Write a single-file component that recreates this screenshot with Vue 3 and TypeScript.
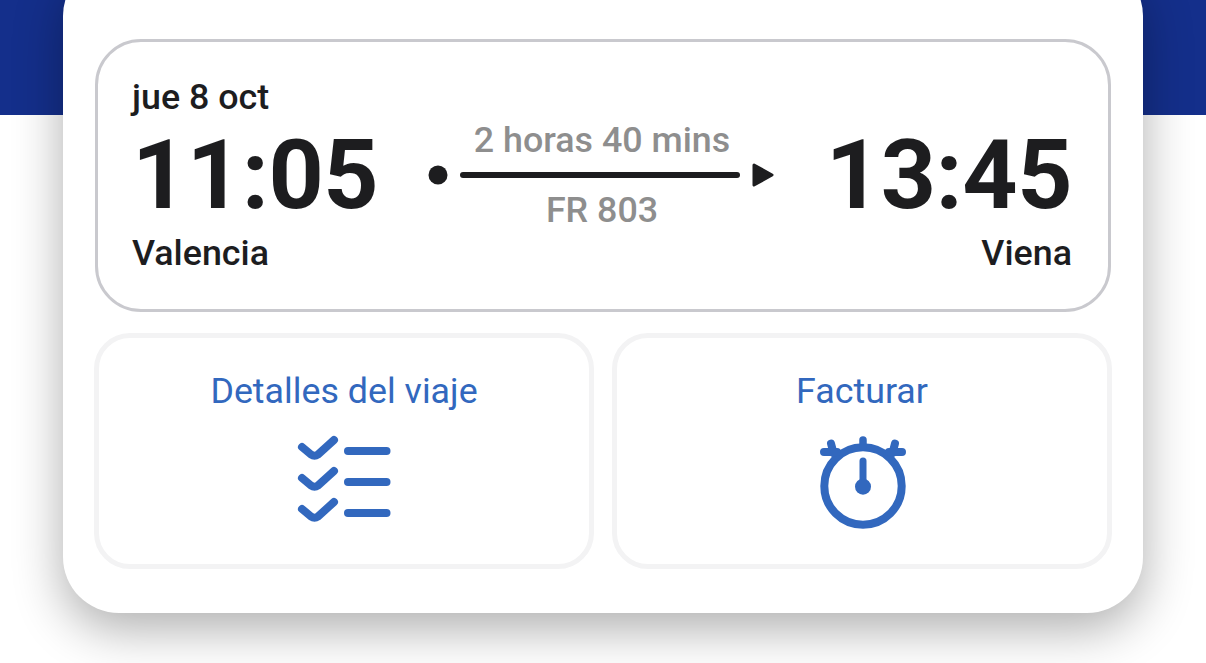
<script setup lang="ts">
const checks: number[] = [0, 1, 2]
</script>

<template>
  <div class="page">
    <section class="card">
      <div class="flight">
        <div class="date">jue 8 oct</div>
        <div class="times">
          <div class="time">11:05</div>
          <div class="route">
            <span class="duration">2 horas 40 mins</span>
            <div class="track">
              <svg class="dot" width="20" height="20" viewBox="0 0 20 20"><circle cx="10" cy="10" r="9.500" fill="#1d1d1f" /></svg>
              <span class="line"></span>
              <svg class="arrow" width="22" height="26" viewBox="0 0 22 26"><path d="M2 3 L20 13 L2 23 Z" fill="#1d1d1f" stroke="#1d1d1f" stroke-width="3" stroke-linejoin="round" /></svg>
            </div>
            <span class="number">FR 803</span>
          </div>
          <div class="time">13:45</div>
        </div>
        <div class="cities">
          <span>Valencia</span>
          <span>Viena</span>
        </div>
      </div>
      <div class="actions">
        <div class="action">
          <span class="label">Detalles del viaje</span>
          <svg class="icon" width="100" height="96" viewBox="0 0 100 96" fill="none" stroke="#3268be" stroke-width="8" stroke-linecap="round" stroke-linejoin="round">
            <g v-for="c in checks" :key="c" :transform="`translate(0 ${c * 31})`">
              <path d="M8 17 L17 24.500 Q20.500 27 24 24.500 L40 10" />
              <path d="M54 21 H92.500" />
            </g>
          </svg>
        </div>
        <div class="action">
          <span class="label">Facturar</span>
          <svg class="icon" width="96" height="102" viewBox="-1 0 96 102" fill="none" stroke="#3268be" stroke-linecap="round">
            <circle cx="48" cy="56" r="38.700" stroke-width="8" />
            <path d="M48 10 V17" stroke-width="7.500" />
            <path d="M9 22 H22 M16 13.500 L18.500 23 M87 22 H74 M80 13.500 L77.500 23" stroke-width="8" />
            <path d="M48 31 V56" stroke-width="7" />
            <circle cx="48" cy="56.700" r="8" fill="#3268be" stroke="none" />
          </svg>
        </div>
      </div>
    </section>
  </div>
</template>

<style>
html, body { margin: 0; padding: 0; background: #fff; }
</style>

<style scoped>
.page {
  width: 1206px;
  height: 663px;
  overflow: hidden;
  display: flex;
  flex-direction: column;
  background: linear-gradient(#142f8b 115px, #fff 115px);
  font-family: Roboto, "Liberation Sans", sans-serif;
}
.card {
  box-sizing: border-box;
  width: 1080px;
  height: 653px;
  margin: -40px 0 0 63px;
  padding: 79px 31px 0 31px;
  background: #fff;
  border-radius: 56px;
  box-shadow: 0 16px 50px rgba(0, 0, 0, 0.32);
  display: flex;
  flex-direction: column;
}
.flight {
  box-sizing: border-box;
  height: 273px;
  margin: 0 1px;
  padding: 35px 36px 0 34px;
  border: 3px solid #c9c9ce;
  border-radius: 46px;
  color: #1d1d1f;
  display: flex;
  flex-direction: column;
}
.date {
  font-size: 35.800px;
  font-weight: 500;
  line-height: 40px;
}
.times {
  display: flex;
  justify-content: space-between;
  align-items: center;
  height: 108px;
  margin-top: 4px;
}
.time {
  font-size: 96.500px;
  font-weight: 700;
  line-height: 108px;
  letter-spacing: -0.500px;
}
.route {
  display: flex;
  flex-direction: column;
  align-items: center;
  color: #8e8e8e;
  font-size: 35.800px;
  font-weight: 500;
  line-height: 40px;
  width: 352px;
}
.track {
  display: flex;
  align-items: center;
  gap: 12px;
  width: 100%;
  height: 30px;
  box-sizing: border-box;
  padding-left: 2px;
}
.line {
  display: block;
  width: 280px;
  height: 6px;
  border-radius: 3px;
  background: #1d1d1f;
}
.dot, .arrow { display: block; }
.cities {
  display: flex;
  justify-content: space-between;
  font-size: 35.800px;
  font-weight: 500;
  line-height: 40px;
  margin-top: 4px;
}
.actions {
  display: grid;
  grid-template-columns: 500px 500px;
  gap: 18px;
  margin-top: 21px;
  height: 236px;
}
.action {
  box-sizing: border-box;
  border: 5px solid #f3f3f4;
  border-radius: 36px;
  display: flex;
  flex-direction: column;
  align-items: center;
  padding-top: 33px;
}
.label {
  color: #3268be;
  font-size: 35.800px;
  line-height: 40px;
}
.icon {
  display: block;
  margin-top: 19px;
}
</style>
